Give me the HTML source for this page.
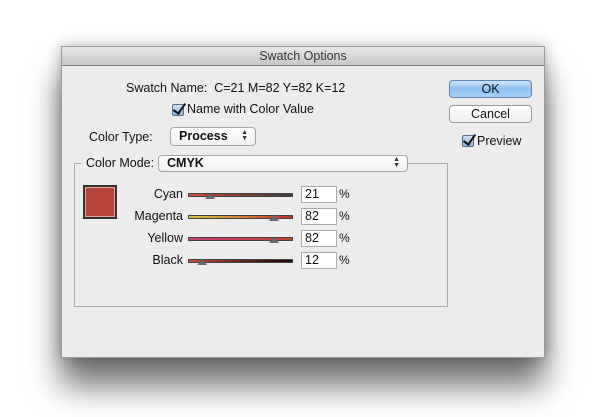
<!DOCTYPE html><html><head><style>
*{box-sizing:border-box}
body{margin:0;width:600px;height:417px;background:#fff;font-family:"Liberation Sans",sans-serif;font-size:12px;color:#111;position:relative;overflow:hidden}
.a{position:absolute}
#dlg{left:61px;top:46px;width:484px;height:312px;background:#ececec;border:1px solid #9a9a9a;box-shadow:0 28px 30px rgba(0,0,0,.55),0 0 14px rgba(0,0,0,.3)}
#tb{left:0;top:0;width:482px;height:19px;background:linear-gradient(#e8e8e8,#c8c8c8);border-bottom:1px solid #777;text-align:center;font-size:12.5px;line-height:19px;color:#333}
.pop{background:linear-gradient(#fff,#f0f0f0);border:1px solid #a5a5a5;border-radius:4px;font-weight:bold;padding-left:8px;line-height:16px;font-size:12.5px}
.arr{position:absolute;right:7px;top:2px;font-size:7px;line-height:6px;color:#333}
.btn{border:1px solid #999;border-radius:4px;text-align:center;line-height:16px;font-size:12.5px}
.cb{width:12px;height:12px;border:1px solid #5a6f8c;border-radius:2px;background:linear-gradient(#cfe0f5,#8fb4e0)}
.cb::after{content:"";position:absolute;left:3px;top:-4px;width:5px;height:11px;border:solid #111;border-width:0 2.5px 2.5px 0;transform:rotate(35deg)}
.bar{left:188px;width:105px;height:4px;border:1px solid #444}
.th{width:0;height:0;border-left:5px solid transparent;border-right:5px solid transparent;border-bottom:6px solid #666}
.fld{left:301px;width:36px;height:17px;background:#fff;border:1px solid #aaa;padding-left:3px;line-height:15px;font-size:12.5px}
.lbl{width:100px;left:83px;text-align:right;font-size:12.5px}
</style></head><body>
<div id="dlg" class="a"><div id="tb" class="a">Swatch Options</div></div>
<div class="a" style="left:126px;top:81px;font-size:12.5px">Swatch Name:&nbsp; C=21 M=82 Y=82 K=12</div>
<div class="a cb" style="left:172px;top:104px"></div>
<div class="a" style="left:187px;top:102px;font-size:12.5px">Name with Color Value</div>
<div class="a" style="left:89px;top:130px;font-size:12.5px">Color Type:</div>
<div class="a pop" style="left:170px;top:127px;width:86px;height:19px">Process<span class="arr">▲<br>▼</span></div>
<div class="a" style="left:74px;top:163px;width:374px;height:144px;border:1px solid #a8a8a8"></div>
<div class="a" style="left:81px;top:156px;background:#ececec;padding:0 5px;font-size:12.5px">Color Mode:</div>
<div class="a pop" style="left:158px;top:155px;width:250px;height:17px;line-height:15px">CMYK<span class="arr" style="top:1px">▲<br>▼</span></div>
<div class="a" style="left:83px;top:185px;width:34px;height:34px;border:2px solid #333;background:#b5443a;box-shadow:inset 0 0 0 1px #e8a090"></div>

<div class="a lbl" style="top:187px">Cyan</div>
<div class="a bar" style="top:193px;background:linear-gradient(90deg,#d84a38,#8a3a30,#333c40)"></div>
<div class="a th" style="left:205px;top:193px"></div>
<div class="a fld" style="top:186px">21</div><div class="a" style="left:339px;top:187px">%</div>

<div class="a lbl" style="top:209px">Magenta</div>
<div class="a bar" style="top:215px;background:linear-gradient(90deg,#d9c53a,#d8803a,#c8282a)"></div>
<div class="a th" style="left:269px;top:215px"></div>
<div class="a fld" style="top:208px">82</div><div class="a" style="left:339px;top:209px">%</div>

<div class="a lbl" style="top:231px">Yellow</div>
<div class="a bar" style="top:237px;background:linear-gradient(90deg,#c8407a,#c84050,#c8402a)"></div>
<div class="a th" style="left:269px;top:237px"></div>
<div class="a fld" style="top:230px">82</div><div class="a" style="left:339px;top:231px">%</div>

<div class="a lbl" style="top:253px">Black</div>
<div class="a bar" style="top:259px;background:linear-gradient(90deg,#d84a38,#6a2018,#1a0a08)"></div>
<div class="a th" style="left:197px;top:259px"></div>
<div class="a fld" style="top:252px">12</div><div class="a" style="left:339px;top:253px">%</div>

<div class="a btn" style="left:449px;top:80px;width:83px;height:18px;background:linear-gradient(#cfe4fb,#8ec0f2 50%,#a9d2f8);border-color:#5c83b4">OK</div>
<div class="a btn" style="left:449px;top:105px;width:83px;height:18px;background:linear-gradient(#fff,#efefef)">Cancel</div>
<div class="a cb" style="left:462px;top:135px"></div>
<div class="a" style="left:477px;top:134px;font-size:12.5px">Preview</div>
</body></html>
